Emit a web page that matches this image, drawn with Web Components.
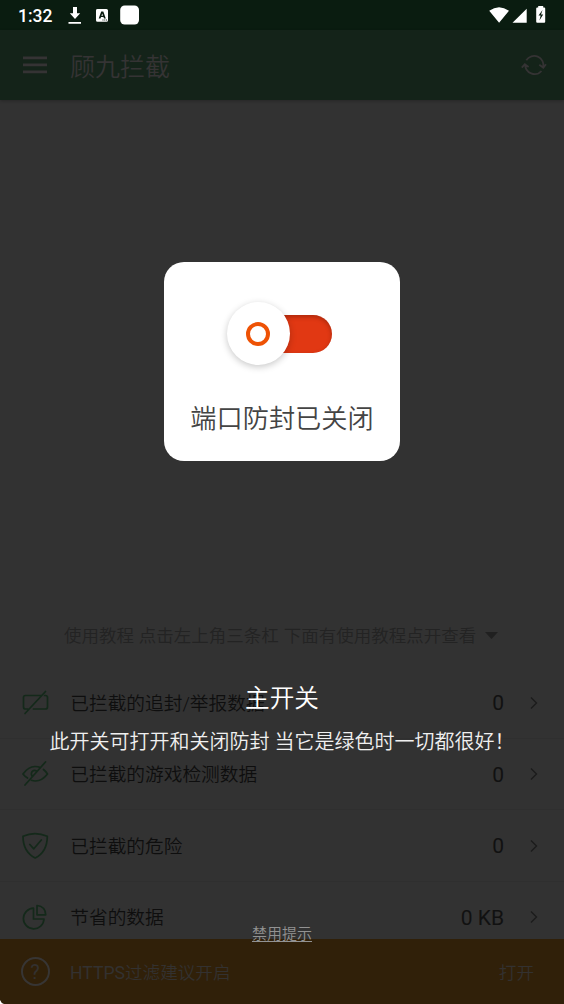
<!DOCTYPE html>
<html lang="zh-CN">
<head>
<meta charset="utf-8">
<title>顾九拦截</title>
<style>
html,body{margin:0;height:100%;overflow:hidden;background:#323232}
body{font-family:Roboto,"Noto Sans CJK SC",sans-serif}
</style>
</head>
<body>
<guard-app></guard-app>
<script>
const define=(name,html)=>{
  const t=document.createElement('template');
  t.innerHTML=html;
  customElements.define(name,class extends HTMLElement{
    constructor(){super();this.attachShadow({mode:'open'}).append(t.content.cloneNode(true));}
  });
};

define('status-bar',`<style>
:host{display:flex;height:30px;box-sizing:border-box;background:#0a1c10;color:#fff;align-items:center;padding:0 17px 0 18px}
.time{font-size:17.500px;line-height:30px;font-weight:500;width:50px;padding-top:2px}
svg{display:block;fill:#fff}
.gap{flex:1}
</style>
<span class="time">1:32</span>
<svg width="72" height="30" viewBox="68 0 72 30"><path d="M73 7h4v6.200h3.200L75 19l-5.200-5.800H73zM68.500 22h12.500v1.700H68.500z"/><path fill-rule="evenodd" d="M97.500 9h9q1.500 0 1.500 1.500v9.800q0 1.500-1.500 1.500h-9q-1.500 0-1.500-1.500v-9.800Q96 9 97.500 9zM101.200 11.500L98.700 18.500h1.800l.5-1.500h2.500l.5 1.500h1.800l-2.500-7zm1 2l.8 2.300h-1.600z"/><path d="M102.500 20h4.500" stroke="#0a1c10" stroke-dasharray="1 .8"/><rect x="120.200" y="5.500" width="18.800" height="19" rx="4.500"/></svg>
<span class="gap"></span>
<svg width="58" height="30" viewBox="489 0 58 30"><path d="M489.200 10.800Q499 3.800 509 10.800L499.100 22.800zM526.700 8.700V22.800H512.500z"/><path fill-rule="evenodd" d="M538.200 7.500V6h5v1.500h1q1 0 1 1v13.300q0 1-1 1h-7q-1 0-1-1V8.500q0-1 1-1zM542.500 10l-4 5.500h2.200l-1.300 5 3.800-6h-2.200z"/></svg>`);

define('title-bar',`<style>
:host{display:flex;height:70px;box-sizing:border-box;background:#142319;color:#353334;align-items:center;padding:0 17px 0 23px;box-shadow:0 1px 3px rgba(0,0,0,.25);z-index:1;position:relative}
.title{font-size:25px;line-height:65px;padding-top:5px;margin-left:23px;flex:1;font-weight:350}
svg{display:block}
</style>
<svg width="24" height="20" viewBox="0 0 24 20" fill="currentColor"><path d="M0 1.500h24v2.700H0zM0 8.500h24v2.700H0zM0 15.500h24v2.700H0z"/></svg>
<span class="title"><slot></slot></span>
<svg width="26" height="24" viewBox="521 52.500 26 24" fill="none" stroke="currentColor" stroke-width="1.800"><path d="M526.300 59.800A9.300 9.300 0 0 1 543.200 67M541.500 70.500A9.300 9.300 0 0 1 525.300 64M539.300 64.200L543.300 67.200 546 63.800M521.800 67.200L524.800 63.800 528.600 66.500"/></svg>`);

define('tutorial-hint',`<style>
:host{display:flex;align-items:center;height:62px;box-sizing:border-box;padding:0 0 3px 64px;font-size:17.500px;word-spacing:.6px;color:#232323;white-space:nowrap;font-weight:350}
svg{margin-left:8.500px;margin-top:2px;display:block}
</style><slot></slot><svg width="13" height="8" viewBox="0 0 13 8"><path d="M0 0H13L6.500 7z" fill="#202020"/></svg>`);

define('stat-row',`<style>
:host{display:flex;flex:none;height:71.500px;box-sizing:border-box;border-bottom:1px solid #2f2f2f;align-items:center;padding:0 25px 0 20px;color:#111}
.icon{width:30px;height:30px;flex:none;padding-top:.5px}
.label{font-size:18.700px;line-height:28px;padding-top:3px;margin-left:20.300px;flex:1;white-space:nowrap;font-weight:350;color:#0e0e0e}
.value{font-size:21px;margin-right:26px;padding-top:2px}
svg{display:block;padding-top:1px}
</style>
<span class="icon"><slot name="icon"></slot></span><span class="label"><slot></slot></span><span class="value"><slot name="value"></slot></span>
<svg width="9" height="14" viewBox="0 0 9 14" fill="none" stroke="#1b1b1b" stroke-width="1.300"><path d="M1 1.500L6.500 7 1 12.500"/></svg>`);

define('stat-list',`<style>
:host{display:block}
svg{display:block;fill:none;stroke:#14291a;stroke-width:1.700;stroke-linejoin:round;stroke-linecap:round}
</style>
<stat-row><svg slot="icon" width="30" height="30"><path d="M21 7.500H5.500q-2 0-2 2v9.500q0 2 2 2H8M13.500 21H25.500q2 0 2-2V9.500q0-2-2-2H24.500M5 25.500L25.500 3.500"/></svg>已拦截的追封/举报数据<span slot="value">0</span></stat-row>
<stat-row><svg slot="icon" width="30" height="30"><path d="M7.500 19Q4.500 17 3 15q5.500-7.500 12-7.500 3 0 5.500 1M23.500 10.500Q26 12.500 27.500 15q-5.500 7-12 7-2.300 0-4-.7M12 17q-1.400-2.500.3-4.600 1.800-1.800 4.300-.5M5 26L25.500 3"/></svg>已拦截的游戏检测数据<span slot="value">0</span></stat-row>
<stat-row><svg slot="icon" width="30" height="30"><path d="M3 5.200Q15 0 27.300 5.200C27.300 15 24 22.500 15.200 27 6.500 22.500 3 15 3 5.200zM9.800 13.500L13.800 17.800 21.300 9"/></svg>已拦截的危险<span slot="value">0</span></stat-row>
<stat-row><svg slot="icon" width="30" height="30"><path d="M13.500 6.200A10.300 10.300 0 1 0 24 17H13.500zM17 3.500V12.800H25.700Q25.500 4.500 17 3.500z"/></svg>节省的数据<span slot="value">0 KB</span></stat-row>`);

define('filter-banner',`<style>
:host{display:flex;height:65px;flex:none;box-sizing:border-box;background:#302009;color:#333130;align-items:center;padding:0 30px 0 20.500px;font-size:17.600px;font-weight:350;position:relative}
.q{width:25px;height:25px;flex:none;border:2px solid #373534;border-radius:50%;display:grid;place-items:center;font-size:20px;font-weight:400;line-height:1}
.text{margin-left:20.500px;flex:1}
::slotted(b){font-weight:400}
svg{position:absolute;left:0;bottom:0}
</style>
<span class="q">?</span><span class="text"><slot></slot></span><span class="act"><slot name="action"></slot></span>
<svg width="5" height="4"><path d="M0 0Q1 3 4 4H0z" fill="#fff"/></svg>`);

define('power-switch',`<style>
:host{display:block;width:105.500px;height:63px;position:relative}
.track{position:absolute;left:25px;right:0;top:12.500px;height:38px;border-radius:19px;background:#e13813;box-shadow:inset 0 2px 4px rgba(90,20,0,.4)}
.knob{position:absolute;left:0;top:0;width:63px;height:63px;border-radius:50%;background:#fff;box-shadow:0 2px 7px rgba(0,0,0,.22);display:grid;place-items:center}
.ring{width:16px;height:16px;border:4px solid #ee5205;border-radius:50%;margin-right:1px}
</style><div class="track"></div><div class="knob"><div class="ring"></div></div>`);

define('switch-card',`<style>
:host{display:flex;flex-direction:column;align-items:center;width:236.500px;height:198.500px;box-sizing:border-box;padding-top:40px;border-radius:20px;background:#fff;color:#444}
.label{font-size:26.200px;line-height:36px;margin-top:35.500px;font-weight:350;white-space:nowrap}
power-switch{margin-right:5.500px}
</style><power-switch></power-switch><span class="label"><slot></slot></span>`);

define('coach-overlay',`<style>
:host{display:flex;flex-direction:column;align-items:center;position:absolute;inset:0;color:#fff;z-index:2;box-sizing:border-box;padding-top:262.200px}
h1{font-size:24.600px;line-height:36px;font-weight:350;margin:220.500px 0 0}
p{font-size:20px;line-height:30px;margin:9.800px 0 0;white-space:nowrap;color:#f0f0f0;font-weight:350}
.off{font-size:15px;line-height:20px;margin-top:166.700px;color:#929292;text-decoration:underline;text-underline-offset:2px;text-decoration-thickness:1px;font-weight:350}
</style>
<switch-card>端口防封已关闭</switch-card>
<h1>主开关</h1><p>此开关可打开和关闭防封 当它是绿色时一切都很好！</p><span class="off">禁用提示</span>`);

define('guard-app',`<style>
:host{display:flex;flex-direction:column;width:564px;height:1004px;position:relative;overflow:hidden;background:#323232}
main{flex:1;min-height:0;overflow:hidden;display:flex;flex-direction:column}
.space{height:505px;flex:none}
tutorial-hint{flex:none}
b{font-weight:400}
</style>
<status-bar></status-bar><title-bar>顾九拦截</title-bar>
<main><div class="space"></div><tutorial-hint>使用教程 点击左上角三条杠 下面有使用教程点开查看</tutorial-hint><stat-list></stat-list></main>
<filter-banner><b>HTTPS</b>过滤建议开启<span slot="action">打开</span></filter-banner>
<coach-overlay></coach-overlay>`);
</script>
</body>
</html>
